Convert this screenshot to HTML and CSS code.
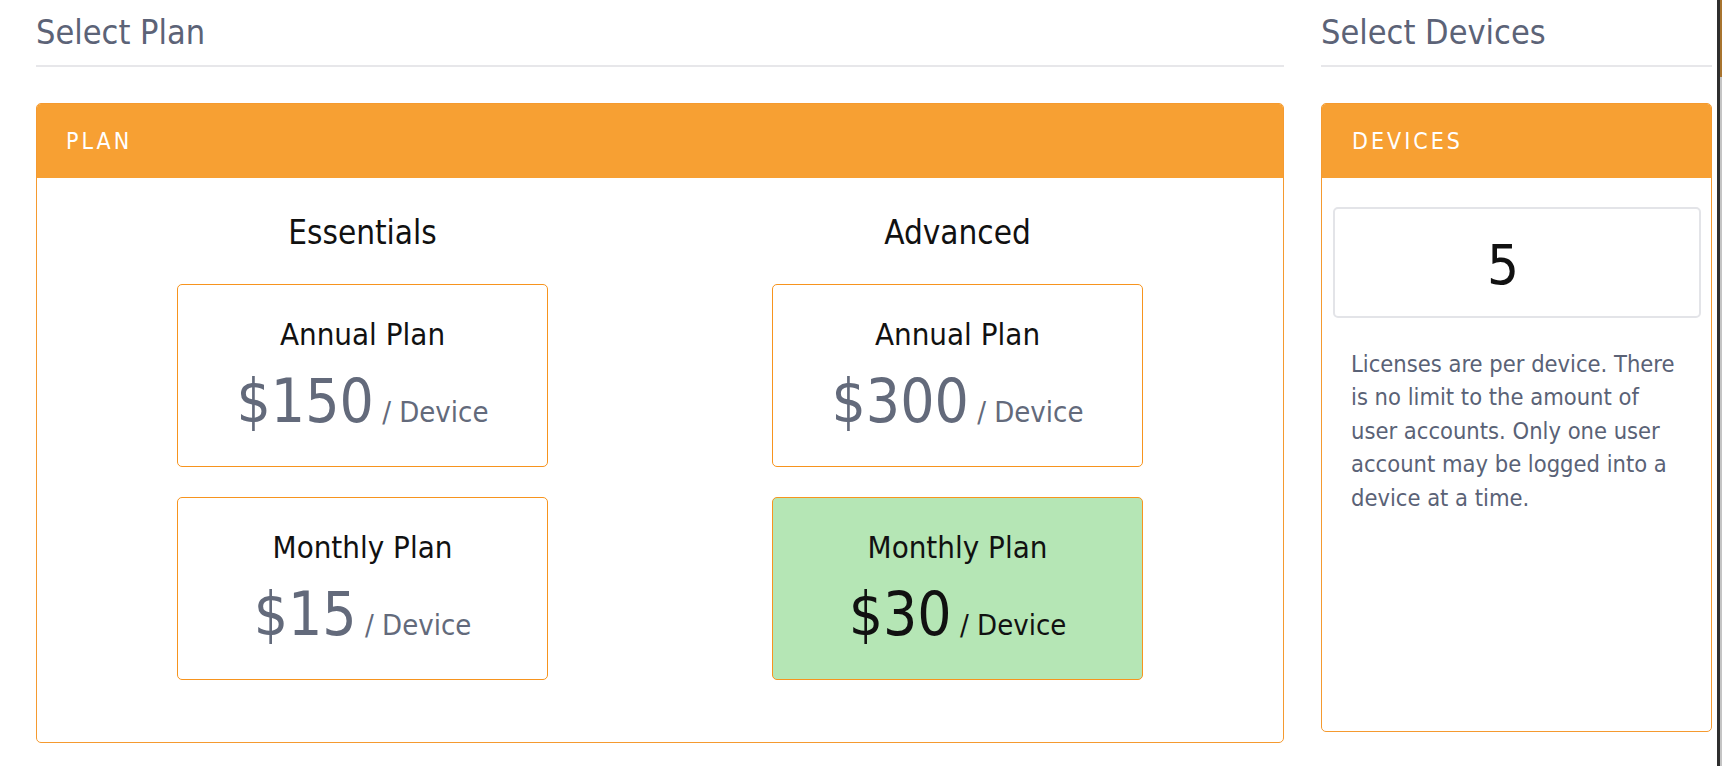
FILE: index.html
```html
<!DOCTYPE html>
<html lang="en">
<head>
  <meta charset="UTF-8">
  <title>Select Plan</title>
  <link rel="stylesheet" href="styles.css">
</head>
<body>
<div class="page">
  <div class="layout">
    <section class="plan-col">
      <h2 class="section-title">Select Plan</h2>
      <div class="panel">
        <div class="panel-heading">PLAN</div>
        <div class="panel-body plans">
          <div class="tier">
            <h3>Essentials</h3>
            <div class="option">
              <div class="option-name">Annual Plan</div>
              <div class="price"><span class="amount">$150</span> / Device</div>
            </div>
            <div class="option">
              <div class="option-name">Monthly Plan</div>
              <div class="price"><span class="amount">$15</span> / Device</div>
            </div>
          </div>
          <div class="tier">
            <h3>Advanced</h3>
            <div class="option">
              <div class="option-name">Annual Plan</div>
              <div class="price"><span class="amount">$300</span> / Device</div>
            </div>
            <div class="option selected">
              <div class="option-name">Monthly Plan</div>
              <div class="price"><span class="amount">$30</span> / Device</div>
            </div>
          </div>
        </div>
      </div>
    </section>

    <section class="devices-col">
      <h2 class="section-title">Select Devices</h2>
      <div class="panel devices-panel">
        <div class="panel-heading">DEVICES</div>
        <div class="panel-body devices">
          <div class="device-count">5</div>
          <p class="note">Licenses are per device. There is no limit to the amount of user accounts. Only one user account may be logged into a device at a time.</p>
        </div>
      </div>
    </section>
  </div>
  <div class="window-edge"></div>
</div>
</body>
</html>
```

FILE: styles.css
```css
* { box-sizing: border-box; }
body {
  margin: 0;
  padding: 0;
  background: #fff;
  font-family: "DejaVu Sans Condensed", "DejaVu Sans", Tahoma, sans-serif;
  font-stretch: condensed;
  color: #111;
}
.page {
  display: flex;
  height: 100vh;
}
.layout {
  flex: 1;
  display: grid;
  grid-template-columns: 1248px 391px;
  column-gap: 37px;
  align-items: start;
  padding-left: 36px;
}
.window-edge {
  flex: 0 0 5px;
  margin-left: 5px;
  border-left: 3px solid #2e2e2e;
  background: linear-gradient(#a8742f 0, #a8742f 77px, #c4c4c4 77px);
}
.section-title {
  margin: 0;
  padding: 12px 0 12px;
  font-size: 34px;
  line-height: 41px;
  font-weight: normal;
  color: #5c6377;
  border-bottom: 2px solid #e7e7ea;
}
.panel {
  margin-top: 36px;
  border: 1px solid #f59a2f;
  border-radius: 5px;
  overflow: hidden;
  background: #fff;
}
.panel-heading {
  height: 74px;
  display: flex;
  align-items: center;
  padding-left: 29px;
  background-color: #f7a033;
  color: #fff;
  font-size: 23px;
  letter-spacing: 3px;
}
.devices-panel .panel-heading {
  padding-left: 30px;
}
.plans {
  display: grid;
  grid-template-columns: 1fr 1fr;
  padding: 35px 28px 62px;
}
.tier {
  display: flex;
  flex-direction: column;
  align-items: center;
}
.tier h3 {
  margin: 0 0 31px;
  font-size: 33px;
  line-height: 40px;
  font-weight: normal;
  color: #111;
}
.option {
  width: 371px;
  height: 183px;
  padding-top: 30px;
  border: 1px solid #f7941e;
  border-radius: 5px;
  text-align: center;
  color: #636a7b;
}
.option + .option {
  margin-top: 30px;
}
.option-name {
  font-size: 31px;
  line-height: 38px;
  color: #111;
}
.price {
  margin-top: 18px;
  font-size: 29px;
  line-height: 60px;
}
.amount {
  font-size: 60px;
}
.option.selected {
  background-color: #b5e6b5;
  color: #111;
}
.devices-panel {
  height: 629px;
}
.devices {
  padding: 29px 10px 0 11px;
}
.device-count {
  height: 111px;
  display: flex;
  align-items: center;
  justify-content: center;
  padding: 4px 28px 0 0;
  border: 2px solid #e3e4e8;
  border-radius: 5px;
  font-size: 56px;
  color: #111;
}
.note {
  margin: 30px 0 0;
  padding-left: 18px;
  width: 345px;
  font-size: 23.5px;
  line-height: 33.4px;
  color: #5a6276;
}
```
